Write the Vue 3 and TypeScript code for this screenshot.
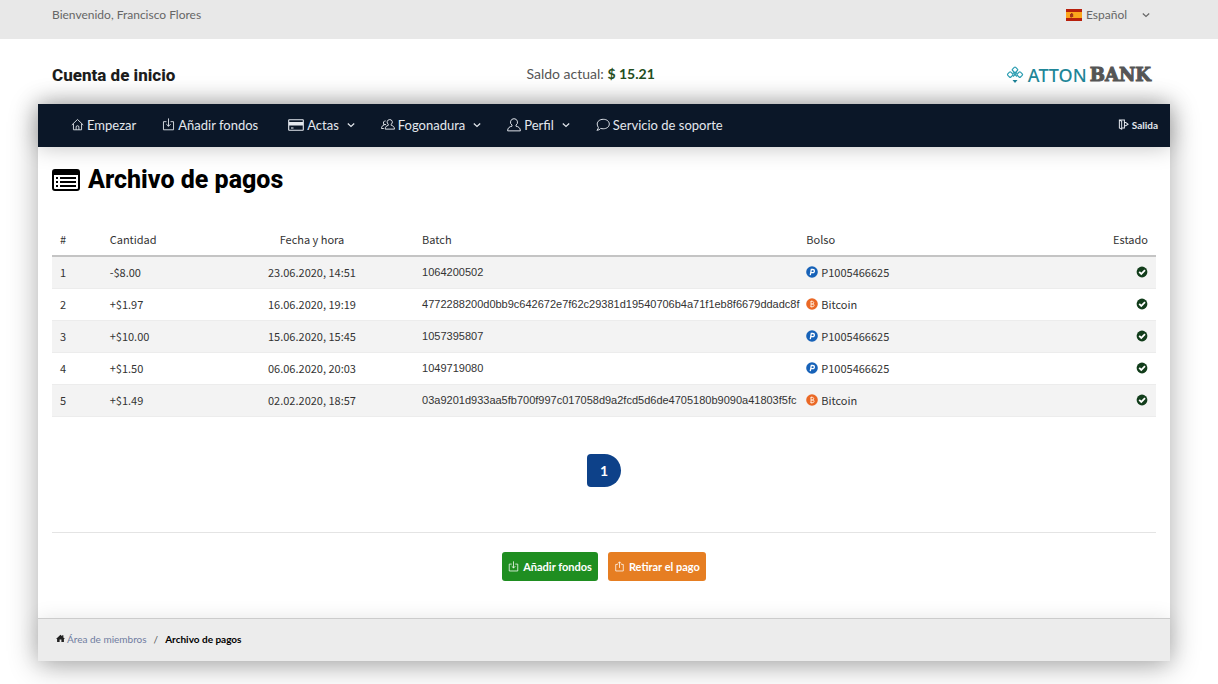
<script setup lang="ts">
import { ref } from 'vue'

interface NavItem { label: string; icon: string; menu?: boolean }
interface Payment { amount: string; date: string; batch: string; wallet: string; kind: 'payeer' | 'bitcoin' }

const language = ref('es')

const navItems: NavItem[] = [
  { label: 'Empezar', icon: 'home' },
  { label: 'Añadir fondos', icon: 'deposit' },
  { label: 'Actas', icon: 'card', menu: true },
  { label: 'Fogonadura', icon: 'users', menu: true },
  { label: 'Perfil', icon: 'user', menu: true },
  { label: 'Servicio de soporte', icon: 'chat' },
]

const icons: Record<string, string> = {
  home: 'M1 8.600 8 1.800l7 6.800M3 7.200v7.300h10V7.200M6.300 14.500v-3.300a1.700 1.700 0 0 1 3.400 0v3.300',
  deposit: 'M5.500 4.500H1.800v10h12.400v-10h-3.700M8 .5v9.700M5.300 7.500 8 10.200l2.700-2.700',
  withdraw: 'M5.500 5H2.500v9.500h11V5h-3M8 10V1.200M5.500 3.700 8 1.200l2.500 2.500',
  users: 'M10 1.800a2.900 2.900 0 0 1 1.700 5.300v1.300c2.200.5 3.700 1.700 3.700 4.300H4.800c0-2.600 1.400-3.800 3.500-4.300V7.100A2.900 2.900 0 0 1 10 1.800M5.300 3.300a2.200 2.200 0 0 0-2 3.600v1.300C1.600 8.700.6 9.700.6 12h2.600M3.300 7.500h2.500',
  user: 'M8 .8a4 4 0 0 1 2.300 7.300v1.300c2.900.5 5 1.900 5 5.300H.7c0-3.400 2.100-4.800 5-5.300V8.100A4 4 0 0 1 8 .8z',
  chat: 'M8.300 1.500c4 0 6.900 2.300 6.900 5.400s-2.900 5.400-6.900 5.400c-1 0-2-.1-2.900-.4-1 1.300-2.500 2-4.400 2.100 1.100-.9 1.700-1.800 1.700-3.200C1.900 9.700 1.400 8.400 1.400 6.900c0-3.100 2.900-5.400 6.900-5.400z',
}

const payments: Payment[] = [
  { amount: '-$8.00', date: '23.06.2020, 14:51', batch: '1064200502', wallet: 'P1005466625', kind: 'payeer' },
  { amount: '+$1.97', date: '16.06.2020, 19:19', batch: '4772288200d0bb9c642672e7f62c29381d19540706b4a71f1eb8f6679ddadc8f', wallet: 'Bitcoin', kind: 'bitcoin' },
  { amount: '+$10.00', date: '15.06.2020, 15:45', batch: '1057395807', wallet: 'P1005466625', kind: 'payeer' },
  { amount: '+$1.50', date: '06.06.2020, 20:03', batch: '1049719080', wallet: 'P1005466625', kind: 'payeer' },
  { amount: '+$1.49', date: '02.02.2020, 18:57', batch: '03a9201d933aa5fb700f997c017058d9a2fcd5d6de4705180b9090a41803f5fc', wallet: 'Bitcoin', kind: 'bitcoin' },
]
</script>

<template>
  <div class="page">
    <div class="topbar">
      <span>Bienvenido, Francisco Flores</span>
      <div class="language">
        <svg class="flag" viewBox="0 0 16 12" aria-hidden="true">
          <path fill="#b8200c" d="M0 0h16v12H0z" /><path fill="#fca51c" d="M0 3h16v6H0z" />
          <path fill="#a53318" d="M4 5h1V4h1.500v1h.700v3H6v.600H4.600V8H4z" />
        </svg>
        <select v-model="language" aria-label="Idioma"><option value="es">Español</option></select>
        <svg class="chevron" viewBox="0 0 8 8" aria-hidden="true"><path d="M.800 2.500 4 5.500l3.200-3" /></svg>
      </div>
    </div>

    <header class="masthead">
      <h2>Cuenta de inicio</h2>
      <p class="balance">Saldo actual: <strong>$ 15.21</strong></p>
      <a href="#" class="logo" aria-label="Atton Bank">
        <svg viewBox="0 0 18 18" aria-hidden="true">
          <g fill="none" stroke="#2b9db1" stroke-width="1.200">
            <rect x="6.800" y="1.600" width="4.400" height="4.400" rx="1" transform="rotate(45 9 3.800)" />
            <rect x="2" y="6.400" width="4.400" height="4.400" rx="1" transform="rotate(45 4.200 8.600)" />
            <rect x="11.600" y="6.400" width="4.400" height="4.400" rx="1" transform="rotate(45 13.800 8.600)" />
            <path d="m7 6.500 4 4m0-4-4 4" />
          </g>
          <path fill="#1b7f94" d="M6.500 14h5L9 17z" />
        </svg>
        <span class="atton">ATTON</span><span class="bank">BANK</span>
      </a>
    </header>

    <div class="panel">
      <nav class="nav">
        <component :is="item.menu ? 'button' : 'a'" v-for="item in navItems" :key="item.label" class="nav-item"
          :class="item.icon" :href="item.menu ? undefined : '#'" :type="item.menu ? 'button' : undefined">
          <svg v-if="item.icon === 'card'" class="icon" viewBox="0 0 16 14" aria-hidden="true">
            <rect x=".700" y="1.700" width="14.600" height="10.600" rx=".500" />
            <path class="solid" d="M1 4h14v3.500H1z" /><path d="M3 10h2.500" />
          </svg>
          <svg v-else class="icon" viewBox="0 0 16 16" aria-hidden="true"><path :d="icons[item.icon]" /></svg>
          <span>{{ item.label }}</span>
          <svg v-if="item.menu" class="chevron" viewBox="0 0 8 8" aria-hidden="true"><path d="M.800 2.500 4 5.500l3.200-3" /></svg>
        </component>
        <a href="#" class="logout">
          <svg class="icon" viewBox="0 0 12 12" aria-hidden="true">
            <path d="M7 3.500V1.200H1.500v8.600L4 11V2.400L1.500 1.200M4 9.800h3V7.500M7 3.800h1.500l2.500 1.800-2.500 1.800H7z" />
          </svg>
          <span>Salida</span>
        </a>
      </nav>

      <main class="content">
        <h1>
          <svg viewBox="0 0 28 24" aria-hidden="true">
            <path fill-rule="evenodd" d="M3 1h22a3 3 0 0 1 3 3v16a3 3 0 0 1-3 3H3a3 3 0 0 1-3-3V4a3 3 0 0 1 3-3zM2 7v13a1 1 0 0 0 1 1h22a1 1 0 0 0 1-1V7z" />
            <path d="M4 9h2v2H4zm4 0h16v2H8zM4 13h2v2H4zm4 0h16v2H8zM4 17h2v2H4zm4 0h16v2H8z" />
          </svg>
          Archivo de pagos
        </h1>

        <table>
          <colgroup><col class="c-num"><col class="c-amount"><col class="c-date"><col class="c-batch"><col><col class="c-state"></colgroup>
          <thead>
            <tr>
              <th scope="col">#</th><th scope="col">Cantidad</th><th scope="col" class="center">Fecha y hora</th>
              <th scope="col">Batch</th><th scope="col">Bolso</th><th scope="col" class="right">Estado</th>
            </tr>
          </thead>
          <tbody>
            <tr v-for="(p, i) in payments" :key="p.batch">
              <td>{{ i + 1 }}</td>
              <td>{{ p.amount }}</td>
              <td class="center">{{ p.date }}</td>
              <td class="batch">{{ p.batch }}</td>
              <td>
                <span class="wallet">
                  <svg v-if="p.kind === 'payeer'" viewBox="0 0 12 12" aria-hidden="true">
                    <circle cx="6" cy="6" r="5.800" fill="#1762b8" />
                    <path fill="none" stroke="#fff" stroke-width="1.300" d="m4.300 9.200 1-5.700h1.500a1.500 1.500 0 0 1 0 3.200H4.800" />
                  </svg>
                  <svg v-else viewBox="0 0 12 12" aria-hidden="true">
                    <circle cx="6" cy="6" r="5.800" fill="#ea6825" />
                    <path fill="none" stroke="#ffe3cf" d="M4.500 3.500h2a1.200 1.200 0 0 1 0 2.500H5h1.800a1.300 1.300 0 0 1 0 2.600H4.300M5 3.500v5M5.800 2.500v1M5.800 8.500v1" />
                  </svg>
                  {{ p.wallet }}
                </span>
              </td>
              <td class="right">
                <svg class="state" viewBox="0 0 12 12" role="img" aria-label="Completado">
                  <circle cx="6" cy="6" r="5.400" fill="#123d1b" />
                  <path fill="none" stroke="#fff" stroke-width="1.800" d="m3.200 5.800 2.100 2.100 3.700-3.700" />
                </svg>
              </td>
            </tr>
          </tbody>
        </table>

        <div class="pagination"><button type="button" aria-current="page">1</button></div>

        <div class="actions">
          <button type="button" class="btn btn-deposit">
            <svg class="icon" viewBox="0 0 16 16" aria-hidden="true"><path :d="icons.deposit" /></svg>Añadir fondos
          </button>
          <button type="button" class="btn btn-withdraw">
            <svg class="icon" viewBox="0 0 16 16" aria-hidden="true"><path :d="icons.withdraw" /></svg>Retirar el pago
          </button>
        </div>
      </main>

      <footer class="breadcrumb">
        <svg viewBox="0 0 10 10" aria-hidden="true"><path d="m5 .800 1.800 1.700V1.500h1.400v2.300L10 5.500H8.800V9H6V6.200H4V9H1.200V5.500H0z" /></svg>
        <a href="#">Área de miembros</a><span class="slash">/</span><strong>Archivo de pagos</strong>
      </footer>
    </div>
  </div>
</template>

<style>
body { margin: 0; background: #fff; }
</style>

<style scoped>
* { box-sizing: border-box; }
.page { font-family: Lato, sans-serif; font-size: 13px; color: #555; padding-bottom: 23px; overflow: hidden; }
a { color: inherit; text-decoration: none; }
button, select { font: inherit; color: inherit; border: 0; background: none; padding: 0; cursor: pointer; }
.topbar { height: 39px; padding: 0 68px 10px 52px; background: #e8e8e8; display: flex; align-items: center; justify-content: space-between; font-size: 12px; color: #666; }
.language { display: flex; align-items: center; gap: 4px; }
.language select { appearance: none; width: 52px; }
.flag { width: 16px; height: 12px; }
.chevron { width: 8px; height: 8px; fill: none; stroke: currentColor; stroke-width: 1.200; }
.masthead { height: 65px; padding: 6px 67px 0 52px; display: flex; justify-content: space-between; align-items: center; }
h1, h2 { margin: 0; font-family: Roboto, "Liberation Sans", sans-serif; font-weight: 800; }
h2 { font-size: 17px; color: #1c1c1c; }
.balance { margin: 0; padding-bottom: 2px; font-size: 14px; }
.balance strong { color: #234d20; }
.logo { display: flex; align-items: center; }
.logo svg { width: 18px; height: 18px; margin-right: 4px; }
.atton { font-family: "Noto Sans", sans-serif; font-size: 18px; line-height: 20px; font-weight: 500; color: #1f8698; }
.bank { font-family: "DejaVu Serif", serif; font-size: 18px; line-height: 20px; font-weight: 700; color: #555; -webkit-text-stroke: 1px #555; margin-left: 3px; }
.panel { margin: 0 48px 0 38px; background: #fff; box-shadow: 0 4px 28px rgba(0, 0, 0, .33); }
.nav { height: 43px; padding: 0 12px 2px 20px; display: flex; align-items: center; background: #0b1728; color: #e4e8ee; box-shadow: 0 0 22px rgba(0, 0, 0, .25); }
.nav-item { display: flex; align-items: center; gap: 3px; padding: 0 13px; }
.icon { width: 13px; height: 13px; fill: none; stroke: currentColor; stroke-width: 1.100; flex: none; }
.users .icon, .user .icon, .chat .icon { width: 14px; height: 14px; }
.card { margin-left: 4px; }
.card .icon { width: 16px; height: 14px; }
.solid { fill: currentColor; stroke: none; }
.nav-item .chevron { margin-left: 5px; }
.logout { margin-left: auto; display: flex; align-items: center; gap: 3px; font-size: 10px; font-weight: 700; }
.logout .icon { width: 11px; height: 11px; }
.content { padding: 12px 14px 37px; }
h1 { display: flex; align-items: center; gap: 8px; font-size: 25px; line-height: 42px; color: #000; }
h1 svg { width: 28px; height: 24px; }
table { width: 100%; margin-top: 22px; border-collapse: collapse; table-layout: fixed; font-family: "Noto Sans CJK SC", "Noto Sans", sans-serif; font-size: 11px; line-height: 16px; color: #333; }
.c-num { width: 4.500%; }
.c-amount { width: 9.800%; }
.c-date { width: 18.500%; }
.c-batch { width: 34.800%; }
.c-state { width: 10%; }
th { height: 33px; font-weight: 400; text-align: left; border-bottom: 2px solid #c4c4c4; }
th, td { padding: 0 8px; white-space: nowrap; }
td { height: 32px; border-bottom: 1px solid #ececec; }
.batch { font-family: "Liberation Sans", sans-serif; }
tbody tr:nth-child(odd) { background: #f3f3f3; }
.center { text-align: center; }
.right { text-align: right; }
.wallet { display: flex; align-items: center; gap: 3px; }
.wallet svg { width: 12px; height: 12px; }
.state { display: block; width: 12px; height: 12px; margin-left: auto; }
.pagination { display: flex; justify-content: center; padding: 37px 0 45px; border-bottom: 1px solid #e4e4e4; }
.pagination button { width: 34px; height: 33px; border-radius: 4px 17px 17px 4px; background: #0d4189; color: #fff; font-size: 14px; font-weight: 700; }
.actions { display: flex; justify-content: center; gap: 10px; padding-top: 19px; }
.btn { display: flex; align-items: center; gap: 4px; height: 29px; padding: 0 6px; border-radius: 3px; color: #fff; font-size: 11px; font-weight: 700; }
.btn .icon { width: 11px; height: 11px; }
.btn-deposit { background: #1f8e21; }
.btn-withdraw { background: #e67e22; }
.breadcrumb { height: 43px; padding: 0 18px 2px; display: flex; align-items: center; background: #ececec; border-top: 1px solid #ccc; box-shadow: 0 0 20px rgba(0, 0, 0, .1); font-size: 10px; }
.breadcrumb svg { width: 9px; height: 9px; fill: #222; margin-right: 2px; }
.breadcrumb a { color: #6f7ca0; }
.slash { margin: 0 7px; }
.breadcrumb strong { color: #000; }
</style>
